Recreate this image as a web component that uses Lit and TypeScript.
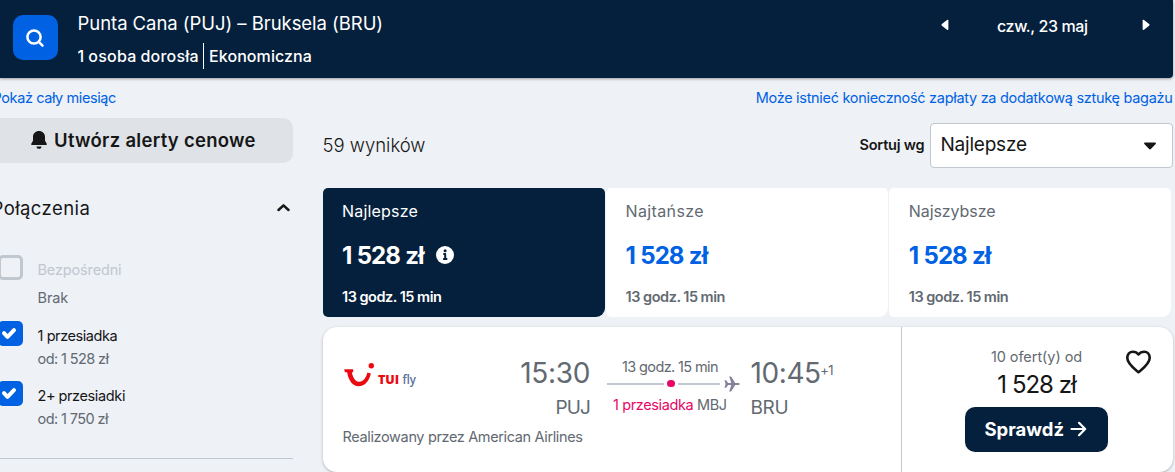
import { LitElement, html, css } from "lit";
import { customElement } from "lit/decorators.js";

interface SortTab {
  label: string;
  cls: string;
  active?: boolean;
}

interface StopOption {
  label: string;
  note: string;
  cls: string;
  checked: boolean;
}

const TABS: SortTab[] = [
  { label: "Najlepsze", cls: "best", active: true },
  { label: "Najtańsze", cls: "cheapest" },
  { label: "Najszybsze", cls: "fastest" },
];

const STOPS: StopOption[] = [
  { label: "Bezpośredni", note: "Brak", cls: "direct", checked: false },
  { label: "1 przesiadka", note: "od: 1 528 zł", cls: "one", checked: true },
  { label: "2+ przesiadki", note: "od: 1 750 zł", cls: "two", checked: true },
];

@customElement("app-root")
export class AppRoot extends LitElement {
  static styles = css`
    :host {
      display: block;
      height: 472px;
      overflow: hidden;
      background: #eef1f6;
      color: #161616;
      font-family: Inter, "Open Sans", sans-serif;
      font-size: 14.5px;
    }
    * { box-sizing: border-box; }
    div, span, button { white-space: nowrap; }
    button { font: inherit; border: 0; padding: 0; margin: 0; }
    svg { display: block; flex: none; }

    .header {
      display: flex;
      width: 1173px;
      height: 78px;
      padding-left: 13px;
      background: #05203c;
      color: #fff;
      border-radius: 0 0 4px 0;
      box-shadow: 0 1px 3px rgba(37, 32, 31, 0.4);
    }
    .search {
      width: 45px;
      height: 45px;
      margin-top: 15px;
      border-radius: 10px;
      background: #0062e3;
      display: grid;
      place-items: center;
    }
    .search svg { margin: 0 2px 0 0; }
    .trip { margin: 11px 0 0 19.5px; flex: 1; }
    .route { font-size: 18.5px; line-height: 25px; letter-spacing: -0.05px; }
    .pax { display: flex; margin-top: 7px; height: 26px; line-height: 26px; font-size: 16px; font-weight: 450; letter-spacing: 0.08px; }
    .adults { border-right: 1px solid #fff; width: 126.5px; letter-spacing: 0.22px; word-spacing: -0.5px; }
    .cabin { padding-left: 5px; }
    .dates { display: flex; align-items: center; height: 24px; margin-top: 14px; padding-right: 23px; font-size: 16px; font-weight: 450; letter-spacing: -0.38px; }
    .date { width: 92px; margin: 0 53px 0 48px; }
    .dates svg { margin-bottom: 2px; }

    .links { display: flex; justify-content: space-between; width: 1172.5px; margin-top: 8px; height: 24px; line-height: 24px; color: #0062e3; }
    .month { margin-left: -7.5px; letter-spacing: -0.4px; }
    .bags { letter-spacing: -0.3px; }

    .body { display: flex; margin-top: 8px; }
    .side { width: 303px; margin-left: -10px; flex: none; }
    .alert { display: flex; align-items: center; width: 303px; height: 45px; padding: 0 0 1px 41px; background: #dfe3e8; border-radius: 10px; color: #161616; font-size: 18.5px; font-weight: 600; letter-spacing: 0.28px; }
    .alert span { margin-left: 7px; }
    .group { display: flex; align-items: center; justify-content: space-between; height: 30px; margin-top: 29.5px; padding: 0 3.5px 0 1.5px; font-size: 18.5px; letter-spacing: 0.42px; }
    .stops { border-bottom: 1px solid #c1c7cf; margin-top: 32.5px; height: 204px; }
    .stop { display: flex; height: 60px; }
    .stop.direct { height: 66px; }
    .box { width: 25px; height: 25px; margin-left: 8px; border-radius: 5px; background: #0062e3; display: grid; place-items: center; }
    .box svg { margin-right: 3px; }
    .direct .box { background: none; border: 3px solid #c1c7cf; }
    .words { margin: 4px 0 0 14.5px; line-height: 22px; letter-spacing: -0.42px; }
    .name { height: 23px; }
    .note { color: #626971; letter-spacing: -0.5px; word-spacing: -0.3px; }
    .two .name { letter-spacing: -0.36px; word-spacing: -0.5px; }
    .direct .name { color: #c1c7cf; letter-spacing: -0.15px; height: 28px; }
    .direct .note { letter-spacing: -0.1px; }

    .main { width: 850px; margin-left: 30px; flex: none; }
    .bar { display: flex; align-items: center; height: 45px; margin-top: 5px; }
    .count { flex: 1; font-size: 18.5px; letter-spacing: 0; font-weight: 300; margin: 0 0 1px -0.5px; }
    .sortlabel { font-weight: 600; letter-spacing: -0.19px; margin: 0 5.5px 2px 0; }
    .select { display: flex; align-items: center; justify-content: space-between; width: 243px; height: 45px; padding: 0 16px 3px 9.5px; background: #fff; border: 1px solid #c1c7cf; border-radius: 4px; font-size: 19px; letter-spacing: -0.22px; }
    .select svg { margin-top: 4px; }

    .tabs { display: grid; grid-template-columns: repeat(3, 282px); gap: 1.2px; margin-top: 20px; }
    .tab { height: 129px; padding: 11px 0 0 19.4px; background: #fff; border-radius: 5px 5px 9px 5px; color: #626971; }
    .tab.active { background: #05203c; color: #fff; padding-left: 19px; }
    .tablabel { height: 24px; line-height: 24px; font-size: 16px; }
    .best .tablabel { letter-spacing: 0.2px; }
    .cheapest .tablabel { letter-spacing: 0.36px; }
    .fastest .tablabel { letter-spacing: -0.08px; }
    .tabprice { display: flex; align-items: center; gap: 12px; height: 32px; margin-top: 16.5px; font-size: 24px; font-weight: 650; letter-spacing: -0.95px; word-spacing: 0.6px; color: #0062e3; }
    .tabprice svg { margin-bottom: 1px; }
    .active .tabprice { color: #fff; }
    .tabtime { margin-top: 15.5px; line-height: 20px; font-weight: 600; letter-spacing: -0.45px; word-spacing: -0.2px; }

    .card { display: flex; height: 145px; margin-top: 10px; background: #fff; border-radius: 14px; box-shadow: 0 1px 3px rgba(37, 32, 31, 0.3); }
    .flight { width: 579px; border-right: 1px solid #c1c7cf; padding: 30px 0 0 19.5px; color: #626971; }
    .leg { display: flex; height: 70px; }
    .carrier { width: 148px; padding-top: 4px; }
    .logo { overflow: visible; margin-left: 0.5px; }
    .dep { width: 99.5px; text-align: right; }
    .time { height: 32px; line-height: 32px; font-size: 28px; letter-spacing: -0.35px; }
    .port { height: 26px; line-height: 26px; margin-top: 6px; font-size: 19px; letter-spacing: -0.9px; }
    .path { width: 133px; margin-left: 17px; }
    .dur { line-height: 20px; padding-left: 15px; letter-spacing: -0.6px; word-spacing: -0.1px; }
    .track { display: flex; align-items: center; height: 15px; margin-top: -1px; }
    .seg { height: 2px; background: #c1c7cf; }
    .seg.a { width: 57px; }
    .seg.b { width: 42.5px; }
    .dot { width: 7.5px; height: 7.5px; border-radius: 50%; background: #e70866; margin: 0 3px; }
    .plane { margin-left: 4px; }
    .via { line-height: 24px; margin-top: 2px; padding-left: 6px; letter-spacing: -0.38px; }
    .stopn { color: #e70866; }
    .arr .time { display: flex; letter-spacing: -0.4px; }
    .arr { margin-left: 10.5px; }
    .plus { font-size: 13px; line-height: 26px; letter-spacing: -0.5px; margin-left: -0.5px; }
    .arr .port { letter-spacing: -0.35px; }
    .operator { line-height: 20px; letter-spacing: -0.36px; }

    .offer { flex: 1; display: flex; flex-direction: column; align-items: center; padding: 20px 2px 0 0; position: relative; }
    .offers { color: #626971; line-height: 20px; letter-spacing: -0.06px; }
    .total { font-size: 24px; line-height: 32px; margin-top: 1.5px; letter-spacing: -1.05px; word-spacing: 0.3px; }
    .heart { position: absolute; left: 222.5px; top: 22px; }
    .go { display: flex; align-items: center; width: 143px; height: 45px; margin-top: 6.5px; padding: 0 0 1px 19.5px; border-radius: 10px; background: #05203c; color: #fff; font-size: 18.5px; font-weight: 700; }
    .go span { margin-right: 6px; }
  `;

  private check() {
    return html`<svg width="16" height="13" viewBox="0 0 16 13" fill="none" stroke="#fff" stroke-width="4" stroke-linecap="round" stroke-linejoin="round"><path d="M3 6.2 6.5 9.8 13 3.2" /></svg>`;
  }

  private stop(s: StopOption) {
    return html`<div class="stop ${s.cls}">
      <div class="box">${s.checked ? this.check() : null}</div>
      <div class="words"><div class="name">${s.label}</div><div class="note">${s.note}</div></div>
    </div>`;
  }

  private tab(t: SortTab) {
    return html`<div class="tab ${t.cls} ${t.active ? "active" : ""}">
      <div class="tablabel">${t.label}</div>
      <div class="tabprice"><span>1 528 zł</span>${t.active
        ? html`<svg width="18" height="18" viewBox="0 0 18 18"><circle cx="9" cy="9" r="9" fill="#fff" /><circle cx="9.1" cy="4.7" r="1.5" fill="#05203c" /><path d="M7.3 8.1h1.9v4.7M7.1 13h4.2" fill="none" stroke="#05203c" stroke-width="2" stroke-linejoin="round" /></svg>`
        : null}</div>
      <div class="tabtime">13 godz. 15 min</div>
    </div>`;
  }

  render() {
    return html`
      <div class="header">
        <div class="search">
          <svg width="20" height="20" viewBox="0 0 20 20" fill="none" stroke="#fff" stroke-width="2.5" stroke-linecap="round"><circle cx="9" cy="9" r="6.6" /><path d="m13.8 13.9 3.7 3.8" /></svg>
        </div>
        <div class="trip">
          <div class="route">Punta Cana (PUJ) – Bruksela (BRU)</div>
          <div class="pax"><span class="adults">1 osoba dorosła</span><span class="cabin">Ekonomiczna</span></div>
        </div>
        <div class="dates">
          <svg width="8" height="12" viewBox="0 0 8 12"><path d="M6 .9C6.7.5 7.4.8 7.4 1.5v8.6c0 .8-.7 1.1-1.4.7L.9 6.7c-.6-.5-.6-1.2 0-1.7z" fill="#fff" /></svg>
          <span class="date">czw., 23 maj</span>
          <svg width="8" height="12" viewBox="0 0 8 12"><path d="M2 .9C1.3.5.6.8.6 1.5v8.6c0 .8.7 1.1 1.4.7l5.1-4.1c.6-.5.6-1.2 0-1.7z" fill="#fff" /></svg>
        </div>
      </div>
      <div class="links"><span class="month">Pokaż cały miesiąc</span><span class="bags">Może istnieć konieczność zapłaty za dodatkową sztukę bagażu</span></div>
      <div class="body">
        <div class="side">
          <button class="alert">
            <svg width="16" height="18" viewBox="0 0 16 18" fill="#161616"><path d="M8 0C4.6 0 2 2.5 2 5.8v3.9L.4 12.5c-.5.8 0 1.5.8 1.5h13.6c.8 0 1.3-.7.8-1.5L14 9.7V5.8C14 2.5 11.4 0 8 0zM5.5 15.5h5c0 1.4-1 2.3-2.5 2.3s-2.5-.9-2.5-2.3z" /></svg>
            <span>Utwórz alerty cenowe</span>
          </button>
          <div class="group"><span>Połączenia</span>
            <svg width="13" height="9" viewBox="0 0 13 9" fill="none" stroke="#161616" stroke-width="2.5" stroke-linecap="round" stroke-linejoin="round"><path d="m1.5 7 5-4.6L11.5 7" /></svg>
          </div>
          <div class="stops">${STOPS.map((s) => this.stop(s))}</div>
        </div>
        <div class="main">
          <div class="bar">
            <span class="count">59 wyników</span>
            <span class="sortlabel">Sortuj wg</span>
            <div class="select"><span>Najlepsze</span>
              <svg width="12" height="8" viewBox="0 0 12 8"><path d="M1 .5h10c.9 0 1.2.8.7 1.4L6.9 7c-.5.6-1.3.6-1.8 0L.3 1.9C-.2 1.3.1.5 1 .5z" fill="#161616" /></svg>
            </div>
          </div>
          <div class="tabs">${TABS.map((t) => this.tab(t))}</div>
          <div class="card">
            <div class="flight">
              <div class="leg">
                <div class="carrier">
                  <svg class="logo" width="76" height="28" viewBox="0 0 76 28">
                    <path d="M1.2 8.2h9v3H8.9c.9 5.2 3.5 9.6 7.3 9.6 4.3 0 7-4.3 8.2-9.2l3.5.9c-1.6 7.200-5.900 12.800-12.300 12.800C9.700 25.300 5.500 19.500 4.100 11.200H1.900z" fill="#ec0a12" />
                    <circle cx="28.3" cy="4.8" r="2.7" fill="#ec0a12" />
                    <text x="35" y="22.7" font-family="Open Sans" font-weight="800" font-size="12.5" textLength="21" fill="#ec0a12">TUI</text>
                    <text x="59.5" y="22.7" font-family="Open Sans" font-weight="600" font-size="13" textLength="13.5" lengthAdjust="spacingAndGlyphs" fill="#5b6f9a">fly</text>
                  </svg>
                </div>
                <div class="dep"><div class="time">15:30</div><div class="port">PUJ</div></div>
                <div class="path">
                  <div class="dur">13 godz. 15 min</div>
                  <div class="track"><span class="seg a"></span><span class="dot"></span><span class="seg b"></span>
                    <svg class="plane" width="16" height="16" viewBox="0 0 16 16" fill="#848199"><path d="M.5 4.2h1.6l2 2.7h3.2L5.2.5h1.9l4.1 6.4h3.3c1.5 0 1.5 2.2 0 2.2h-3.300l-4.100 6.400H5.200l2.100-6.400H4.100l-2 2.700H.5L1.600 8z" /></svg>
                  </div>
                  <div class="via"><span class="stopn">1 przesiadka</span> MBJ</div>
                </div>
                <div class="arr"><div class="time">10:45<span class="plus">+1</span></div><div class="port">BRU</div></div>
              </div>
              <div class="operator">Realizowany przez American Airlines</div>
            </div>
            <div class="offer">
              <div class="offers">10 ofert(y) od</div>
              <div class="total">1 528 zł</div>
              <svg class="heart" width="27" height="26" viewBox="0 0 27 26" fill="none" stroke="#161616" stroke-width="2.6" stroke-linejoin="round"><path d="M13.5 23.2C9 19.4 2.3 14.6 2.3 8.9c0-3.7 2.4-6.2 5.5-6.2 2.5 0 4.4 1 5.7 2.8 1.3-1.8 3.2-2.8 5.7-2.8 3.1 0 5.5 2.5 5.5 6.2 0 5.7-6.7 10.5-11.2 14.3z" /></svg>
              <button class="go"><span>Sprawdź</span>
                <svg width="17" height="16" viewBox="0 0 17 16" fill="none" stroke="#fff" stroke-width="2.2" stroke-linecap="round" stroke-linejoin="round"><path d="M1.5 8h13.5M9 1.8 15.2 8 9 14.2" /></svg>
              </button>
            </div>
          </div>
        </div>
      </div>
    `;
  }
}
